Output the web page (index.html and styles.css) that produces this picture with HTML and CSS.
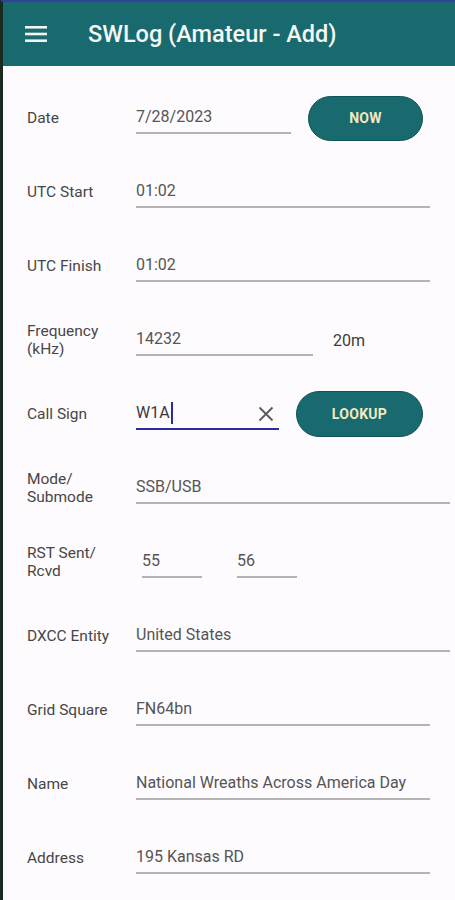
FILE: index.html
```html
<!DOCTYPE html>
<html lang="en">
<head>
    <meta charset="UTF-8">
    <meta name="viewport" content="width=device-width, initial-scale=1.0">
    <title>SWLog (Amateur - Add)</title>
    <link rel="stylesheet" href="styles.css">
</head>
<body>
    <div class="screen">
        <header class="appbar">
            <svg class="menu-icon" width="22" height="16" viewBox="0 0 22 16">
                <rect x="0" y="0" width="22" height="2.6" fill="#f4f4f4"/>
                <rect x="0" y="6.7" width="22" height="2.6" fill="#f4f4f4"/>
                <rect x="0" y="13.4" width="22" height="2.6" fill="#f4f4f4"/>
            </svg>
            <h1>SWLog (Amateur - Add)</h1>
        </header>

        <div class="log-form">
            <div class="row">
                <div class="row-label">Date</div>
                <div class="field field-date">7/28/2023</div>
                <button class="btn btn-now">NOW</button>
            </div>

            <div class="row">
                <div class="row-label">UTC Start</div>
                <div class="field field-wide">01:02</div>
            </div>

            <div class="row">
                <div class="row-label">UTC Finish</div>
                <div class="field field-wide">01:02</div>
            </div>

            <div class="row">
                <div class="row-label">Frequency<br>(kHz)</div>
                <div class="field field-freq">14232</div>
                <div class="band">20m</div>
            </div>

            <div class="row">
                <div class="row-label">Call Sign</div>
                <div class="field field-call active">
                    <span>W1A</span><span class="caret"></span>
                    <svg class="clear-icon" width="16" height="16" viewBox="0 0 16 16">
                        <path d="M1.5 1.5 L14.5 14.5 M14.5 1.5 L1.5 14.5" stroke="#5a5a5a" stroke-width="1.8" fill="none"/>
                    </svg>
                </div>
                <button class="btn btn-lookup">LOOKUP</button>
            </div>

            <div class="row">
                <div class="row-label">Mode/<br>Submode</div>
                <div class="field field-wide field-long">SSB/USB</div>
            </div>

            <div class="row">
                <div class="row-label">RST Sent/<br>Rcvd</div>
                <div class="field field-rst">55</div>
                <div class="field field-rst">56</div>
            </div>

            <div class="row">
                <div class="row-label">DXCC Entity</div>
                <div class="field field-wide field-long">United States</div>
            </div>

            <div class="row">
                <div class="row-label">Grid Square</div>
                <div class="field field-wide">FN64bn</div>
            </div>

            <div class="row">
                <div class="row-label">Name</div>
                <div class="field field-wide">National Wreaths Across America Day</div>
            </div>

            <div class="row">
                <div class="row-label">Address</div>
                <div class="field field-wide">195 Kansas RD</div>
            </div>
        </div>
    </div>
</body>
</html>
```

FILE: styles.css
```css
:root {
    --teal: #186a6e;
    --teal-dark: #0f5458;
    --cream: #f2e8c2;
    --bg: #fdfbfd;
    --label: #474747;
    --value: #555555;
    --line: #b4b4b4;
    --accent: #2b2ca3;
}

* {
    margin: 0;
    padding: 0;
    box-sizing: border-box;
}

body {
    font-family: Roboto, 'Liberation Sans', sans-serif;
    background-color: var(--bg);
}

.screen {
    width: 455px;
    height: 900px;
    overflow: hidden;
    border-left: 3px solid #1b2a21;
    border-top: 2px solid #34409a;
    background-color: var(--bg);
}

.appbar {
    height: 64px;
    background-color: var(--teal);
    display: flex;
    align-items: center;
    padding-left: 22px;
}

.menu-icon {
    flex: none;
    margin-right: 41px;
}

.appbar h1 {
    color: #f6f6f6;
    font-size: 23.5px;
    font-weight: 500;
}

.log-form {
    padding: 15px 25px 0 24px;
}

.row {
    height: 74px;
    display: flex;
    align-items: center;
}

.row-label {
    width: 109px;
    flex: none;
    font-size: 15.5px;
    line-height: 18px;
    color: var(--label);
}

.field {
    position: relative;
    font-size: 16px;
    line-height: 22px;
    padding: 4px 0 4px 0;
    color: var(--value);
    border-bottom: 2px solid var(--line);
    white-space: nowrap;
}

.field-wide {
    flex: 1;
}

.field-long {
    margin-right: -20px;
}

.field-date {
    width: 155px;
    margin-right: 17px;
}

.field-freq {
    width: 177px;
    margin-right: 20px;
}

.band {
    font-size: 16px;
    color: #3c3c3c;
}

.field-call {
    width: 143px;
    margin-right: 17px;
    display: flex;
    align-items: center;
}

.field-call.active {
    border-bottom-color: var(--accent);
    color: #3a3a3a;
}

.caret {
    display: inline-block;
    width: 2px;
    height: 22px;
    background-color: var(--accent);
    margin-left: 1px;
}

.clear-icon {
    position: absolute;
    right: 5px;
    top: 8px;
}

.field-rst {
    width: 60px;
    margin-left: 6px;
    margin-right: 29px;
}

.btn {
    border: 1px solid var(--teal-dark);
    background-color: var(--teal);
    color: var(--cream);
    font-family: Roboto, sans-serif;
    font-weight: 700;
    font-size: 14px;
    letter-spacing: 0.3px;
    border-radius: 24px;
    height: 45px;
    cursor: pointer;
}

.btn-now {
    width: 115px;
}

.btn-lookup {
    width: 127px;
    height: 46px;
}
```
